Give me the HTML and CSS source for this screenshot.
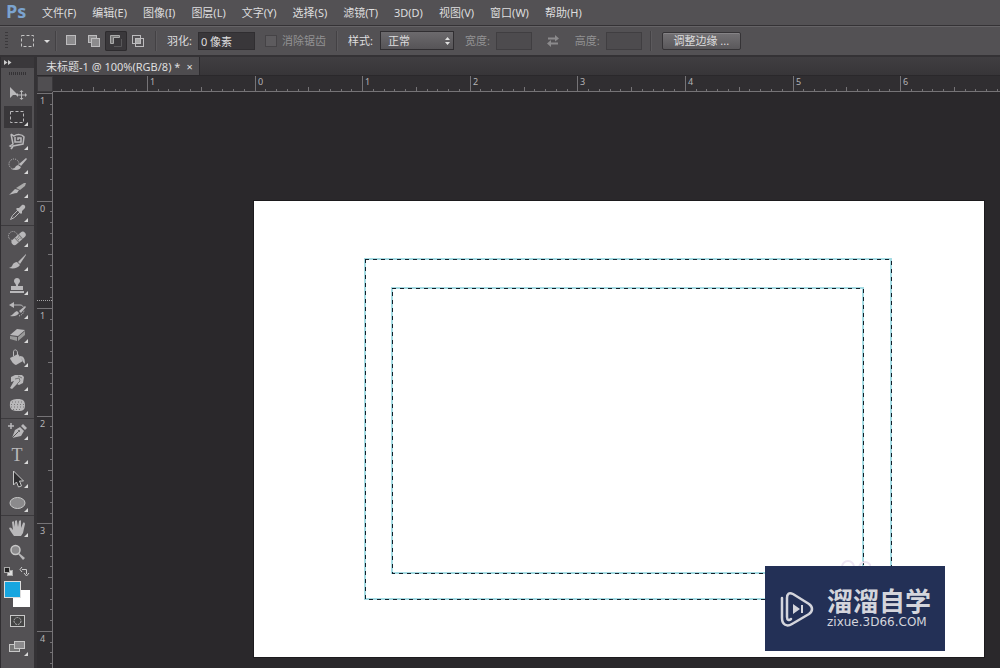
FILE: index.html
```
<!DOCTYPE html>
<html lang="zh-CN">
<head>
  <meta charset="UTF-8">
  <meta name="viewport" content="width=device-width, initial-scale=1.0">
  <title>未标题-1 @ 100%(RGB/8) *</title>
  <link rel="stylesheet" href="styles.css">
</head>
<body>
  <nav class="menu-bar">
    <span class="logo">Ps</span>
    <button>文件(F)</button>
    <button>编辑(E)</button>
    <button>图像(I)</button>
    <button>图层(L)</button>
    <button>文字(Y)</button>
    <button>选择(S)</button>
    <button>滤镜(T)</button>
    <button>3D(D)</button>
    <button>视图(V)</button>
    <button>窗口(W)</button>
    <button>帮助(H)</button>
  </nav>

  <div class="options-bar">
    <span class="grip"></span>
    <button class="preset" aria-label="工具预设">
      <svg width="30" height="14" viewBox="0 0 30 14"><rect x="1.500" y="1.500" width="12" height="11" fill="none" stroke="#c4c4c4" stroke-dasharray="3 2"/><path d="M24 6h6l-3 3z" fill="#ddd"/></svg>
    </button>
    <span class="divider"></span>
    <div class="modes">
      <button aria-label="新选区"><svg width="14" height="14" viewBox="0 0 14 14"><rect x="1.500" y="1.500" width="9" height="9" fill="#8c8b8d" stroke="#bdbcbe"/></svg></button>
      <button aria-label="添加到选区"><svg width="14" height="14" viewBox="0 0 14 14"><rect x="1.500" y="1.500" width="8" height="7" fill="#8c8b8d" stroke="#bdbcbe"/><rect x="4.500" y="4.500" width="8" height="8" fill="#8c8b8d" stroke="#bdbcbe"/></svg></button>
      <button class="on" aria-label="从选区减去"><svg width="14" height="14" viewBox="0 0 14 14"><path d="M1.500 9.500v-8h9v2h-6v6z" fill="#777" stroke="#aaa"/><path d="M12.500 5v7.500H5" fill="none" stroke="#59585a"/></svg></button>
      <button aria-label="与选区交叉"><svg width="14" height="14" viewBox="0 0 14 14"><rect x="1.500" y="1.500" width="8" height="8" fill="none" stroke="#bdbcbe"/><rect x="4.500" y="4.500" width="8" height="8" fill="none" stroke="#bdbcbe"/><path d="M5 5h4v4H5z" fill="#aaa"/></svg></button>
    </div>
    <span class="divider"></span>
    <label for="feather">羽化:</label>
    <input class="feather" id="feather" type="text" value="0 像素">
    <label class="check dim"><input type="checkbox" disabled>消除锯齿</label>
    <span class="divider"></span>
    <label for="style">样式:</label>
    <div class="select">
      <select id="style"><option>正常</option><option>固定比例</option><option>固定大小</option></select>
      <svg width="5" height="8" viewBox="0 0 5 8"><path d="M0 3l2.500-3L5 3zM0 5h5L2.500 8z" fill="#e0e0e0"/></svg>
    </div>
    <label class="dim" for="width">宽度:</label>
    <input class="size" id="width" type="text" disabled>
    <button class="swap" aria-label="高度和宽度互换" disabled><svg width="14" height="12" viewBox="0 0 14 12"><path d="M2 2.500h7V0l4 3.500-4 3v-2H2zM12 7.500H5V5L1 8.500 5 12V9.500h7z" fill="#8b8a8c"/></svg></button>
    <label class="dim" for="height">高度:</label>
    <input class="size" id="height" type="text" disabled>
    <span class="divider"></span>
    <button class="refine">调整边缘 ...</button>
  </div>

  <div class="workspace">
    <aside class="toolbox">
      <div class="toolbox-head"><svg width="8" height="5" viewBox="0 0 8 5"><path d="M0 0l3.500 2.500L0 5zM4 0l3.500 2.500L4 5z" fill="#ccc"/></svg></div>
      <div class="toolbox-grip"><span></span></div>

      <div class="group">
        <button aria-label="移动"><svg viewBox="0 0 28 24"><path d="M6 6v11l3-3h5z"/><path class="line" d="M17.500 10v8M13.500 14h8"/><path d="M15.500 11l2-2 2 2zM15.500 17l2 2 2-2zM14 12l-2 2 2 2zM21 12l2 2-2 2z"/></svg></button>
        <button class="more on" aria-label="矩形选框"><svg viewBox="0 0 28 24"><rect class="line" x="6.500" y="6.500" width="13" height="11" stroke-dasharray="3 2"/></svg></button>
        <button class="more" aria-label="套索"><svg viewBox="0 0 28 24"><path class="line" d="M7 5l3 2c3-2 8-2 10 1l-1 7-10 2-2 3M7 5l2 10-3 2 3 2" stroke-width="1.500"/><path class="line" d="M11 8v5h6V9h-3v2" stroke-width="1.500"/></svg></button>
        <button class="more" aria-label="快速选择"><svg viewBox="0 0 28 24"><circle class="line" cx="10" cy="11" r="5" stroke-dasharray="1 1"/><path d="M22 5l-7 6 2 2 6-7zM14 12l3 2c-1 3-5 4-10 2 3 0 4-1 5-3z"/></svg></button>
        <button class="more" aria-label="裁剪"><svg viewBox="0 0 28 24"><path d="M5 18l6-6 4 1-2 3c-3 0-5 1-8 2z"/><path d="M12 11l8-5h2l-1 3-5 4z" fill="#aaa"/></svg></button>
        <button class="more" aria-label="吸管"><svg viewBox="0 0 28 24"><path class="line" d="M6.500 18.500l2-4 6-6 2 2-6 6z"/><path d="M13 7l2 0 3-3c2-1 4 1 3 3l-3 3v2l-1 1-5-5z"/></svg></button>
      </div>

      <div class="group">
        <button class="more" aria-label="修复画笔"><svg viewBox="0 0 28 24"><circle class="line" cx="9" cy="10" r="4.500" stroke-dasharray="1 1"/><g transform="rotate(-42 15 12)"><rect x="6" y="9" width="17" height="6" rx="3"/><path d="M12 9v6M17 9v6" stroke="#777"/><path d="M13 11h1M15 11h1M13 13h1M15 13h1" stroke="#666"/></g></svg></button>
        <button class="more" aria-label="画笔"><svg viewBox="0 0 28 24"><path d="M22 4l-8 8 2 2 6-9zM13 12l3 3c-2 3-6 4-11 3 3-1 3-2 4-4 1-1 2-2 4-2z"/></svg></button>
        <button class="more" aria-label="仿制图章"><svg viewBox="0 0 28 24"><path d="M12 12c0-3-2-3-2-5 0-4 6-4 6 0 0 2-2 2-2 5h5v4H7v-4zM6 17h14v2H6z"/></svg></button>
        <button class="more" aria-label="历史记录画笔"><svg viewBox="0 0 28 24"><path class="line" d="M9 7h7c2 0 3 1 3 2"/><path d="M10 4v6L5 7z"/><path d="M21 8l-6 5 2 2 5-6zM13 13l2 2c-1 2-4 4-9 3 3-1 4-4 7-5z"/><path class="line" d="M15 18c3-1 5-3 5-6" stroke-dasharray="1 1"/></svg></button>
        <button class="more" aria-label="橡皮擦"><svg viewBox="0 0 28 24"><path d="M6 13l7-6 8 1-7 6z"/><path d="M6 14l7 1v4l-7-2zM14 15l7-6v4l-7 6z" fill="#999"/></svg></button>
        <button class="more" aria-label="油漆桶"><svg viewBox="0 0 28 24"><path d="M6 12l8-4 5 7-7 4c-2 0-5-4-6-7z"/><path class="line" d="M13.500 12V7c0-4-4-4-4-1v4"/><path d="M16 10c4 0 5 3 5 8l-2-2c0-2-1-3-3-4z"/></svg></button>
        <button class="more" aria-label="涂抹"><svg viewBox="0 0 28 24"><path d="M7 7l4-2h7l2 2-1 6-4 2-2-1-5 5-2-1 4-7-3 1z"/><path d="M11 9l4-1 1 3-3 3M14 6l4 2" fill="none" stroke="#777"/></svg></button>
        <button class="more" aria-label="海绵"><svg viewBox="0 0 28 24"><path d="M6 9c0-3 4-4 8-4 5 0 7 2 7 6s-1 6-7 6c-5 0-9-1-8-8z"/><path d="M8 8h10M7 10.500h13M7 13h13M9 15.500h9" stroke="#777" stroke-dasharray="1 2" fill="none"/></svg></button>
      </div>

      <div class="group">
        <button class="more" aria-label="钢笔"><svg viewBox="0 0 28 24"><path class="line" d="M7 4v6M4 7h6" stroke-width="1.500"/><path d="M8 19l3-8 5-3 4 4-3 5z"/><path d="M17 7l2-2 4 4-2 2z"/><path d="M8 19l6-6" stroke="#555"/><circle cx="15" cy="12" r="1" fill="#555"/></svg></button>
        <button class="more" aria-label="文字"><svg viewBox="0 0 28 24"><text class="type-glyph" x="13" y="18" text-anchor="middle">T</text></svg></button>
        <button class="more" aria-label="路径选择"><svg viewBox="0 0 28 24"><path d="M9.500 4v14l3-3 2 5 3-1-2-5h4z" fill="#302f31" stroke="#c8c8c8"/></svg></button>
        <button class="more" aria-label="椭圆"><svg viewBox="0 0 28 24"><ellipse cx="13.500" cy="12" rx="7.500" ry="5.500" fill="#8b8a8c" stroke="#c8c8c8"/></svg></button>
      </div>

      <div class="group">
        <button class="more" aria-label="抓手"><svg viewBox="0 0 28 24"><path d="M10 20c-2-3-4-5-5-8 1-1 2-1 4 2L8 6c1-1 2-1 2 0l1 5V5c1-1 2-1 2 0l1 6 1-6c1-1 2-1 2 0v7l2-5c1-1 2 0 2 1l-2 9-2 3z"/></svg></button>
        <button aria-label="缩放"><svg viewBox="0 0 28 24"><circle cx="11.500" cy="10" r="4.500" fill="#8b8a8c" stroke="#c8c8c8" stroke-width="1.500"/><path d="M15 13l6 5-2 2-5-6z"/></svg></button>
      </div>

      <svg class="swatches" viewBox="0 0 28 46" role="img" aria-label="前景色和背景色">
        <rect x="3.500" y="6.500" width="5" height="5" fill="#ddd" stroke="#aaa"/>
        <rect x="0.500" y="3.500" width="5" height="5" fill="#222" stroke="#aaa"/>
        <path d="M18 5.500h4.500V10M18 3l-2 2.500L18 8M20 9l2.500 3L25 9" fill="none" stroke="#ccc"/>
        <rect x="9" y="26" width="17" height="17" fill="#fff"/>
        <rect x="0.500" y="17.500" width="16" height="16" fill="#17a6e0" stroke="#ddd"/>
      </svg>
      <button aria-label="快速蒙版"><svg viewBox="0 0 28 24"><rect x="6.500" y="5.500" width="14" height="11" fill="#444" stroke="#c8c8c8"/><circle class="line" cx="13.500" cy="11" r="3.500" stroke-dasharray="2 1"/></svg></button>
      <button class="more" aria-label="屏幕模式"><svg viewBox="0 0 28 24"><rect x="5.500" y="9.500" width="10" height="7" fill="#777" stroke="#c8c8c8"/><rect x="10.500" y="6.500" width="10" height="7" fill="#8b8a8c" stroke="#c8c8c8"/></svg></button>
    </aside>

    <main class="document">
      <div class="tabs">
        <div class="tab"><span>未标题-1 @ 100%(RGB/8) *</span><button aria-label="关闭">×</button></div>
      </div>
      <div class="stage">
        <div class="corner"></div>
        <svg class="ruler ruler-x" id="rulerX"></svg>
        <svg class="ruler ruler-y" id="rulerY"></svg>
        <div class="canvas">
          <div class="paper">
            <svg class="selection outer"><rect class="edge" width="100%" height="100%"/><rect class="ants" width="100%" height="100%"/></svg>
            <svg class="selection inner"><rect class="edge" width="100%" height="100%"/><rect class="ants" width="100%" height="100%"/></svg>
            <svg class="faint" width="32" height="12" viewBox="0 0 32 12"><circle cx="9" cy="7" r="6"/><circle cx="26" cy="8" r="6"/></svg>
            <div class="watermark">
              <svg width="36" height="38" viewBox="0 0 36 38">
                <path d="M3 8v20c0 7 5 9 10 6l17-10c4-3 4-7 0-10L14 4c-4-2-6 0-6 4v19c0 3 2 4 4 2" fill="none" stroke="#d4d5dc" stroke-width="2.500" stroke-linecap="round"/>
                <path d="M14 14l7 5-7 5zM22 15h2v8h-2z" fill="#d4d5dc"/>
              </svg>
              <div class="watermark-text">
                <strong>溜溜自学</strong>
                <span>zixue.3D66.COM</span>
              </div>
            </div>
          </div>
        </div>
      </div>
    </main>
  </div>

  <script>
    const UNIT = 107.6;
    const NS = 'http://www.w3.org/2000/svg';

    function add(svg, name, attrs, text) {
      const el = document.createElementNS(NS, name);
      for (const key in attrs) el.setAttribute(key, attrs[key]);
      if (text !== undefined) el.textContent = text;
      svg.appendChild(el);
    }

    // 每个单位分为 10 格，中间一格稍长
    function drawRuler(svg, origin, vertical) {
      const box = svg.getBoundingClientRect();
      const length = vertical ? box.height : box.width;
      const depth = vertical ? box.width : box.height;
      svg.innerHTML = '';
      for (let i = -Math.floor(origin / UNIT * 10); origin + i * UNIT / 10 < length; i++) {
        const pos = Math.floor(origin + i * UNIT / 10);
        const size = i % 10 === 0 ? depth : i % 5 === 0 ? 5 : 3;
        const start = depth - size;
        if (vertical) {
          add(svg, 'rect', { x: start, y: pos, width: size, height: 1 });
        } else {
          add(svg, 'rect', { x: pos, y: start, width: 1, height: size });
        }
        if (i % 10 === 0) {
          const at = vertical ? { x: 3, y: pos + 11 } : { x: pos + 3, y: 9 };
          add(svg, 'text', at, Math.abs(i / 10));
        }
      }
      if (vertical) {
        add(svg, 'path', { class: 'cursor', d: 'M0 208.5h' + depth });
      }
    }

    function drawRulers() {
      drawRuler(document.getElementById('rulerX'), 202, false);
      drawRuler(document.getElementById('rulerY'), 109, true);
    }

    drawRulers();
    window.addEventListener('resize', drawRulers);
  </script>
</body>
</html>
```
FILE: styles.css
```
:root {
  --panel: #535154;
  --dark: #2a282b;
  --text: #dededf;
  --dim: #929193;
  --icon: #b9b8ba;
}

* {
  margin: 0;
  padding: 0;
  box-sizing: border-box;
}

body {
  font-family: 'Noto Sans', 'Noto Sans CJK SC', sans-serif;
  font-size: 11px;
  line-height: 16px;
  color: var(--text);
  background: var(--dark);
  height: 100vh;
  display: flex;
  flex-direction: column;
  overflow: hidden;
}

button,
input,
select {
  font: inherit;
  color: inherit;
  background: none;
  border: none;
}

svg {
  display: block;
}

/* 菜单栏 */
.menu-bar {
  display: flex;
  align-items: center;
  height: 25px;
  flex-shrink: 0;
  background: var(--panel);
  padding-left: 6px;
}

.logo {
  width: 28px;
  padding-bottom: 3px;
  font-family: 'Open Sans', sans-serif;
  font-size: 18px;
  font-weight: bold;
  color: #7ba3cf;
}

.menu-bar button {
  padding: 0 8px;
  white-space: nowrap;
}

/* 选项栏 */
.options-bar {
  display: flex;
  align-items: center;
  height: 32px;
  flex-shrink: 0;
  background: var(--panel);
  border-top: 1px solid #343235;
  border-bottom: 2px solid #343235;
  box-shadow: inset 0 1px #656366;
  padding-left: 5px;
  white-space: nowrap;
}

.grip {
  width: 3px;
  height: 18px;
  margin-right: 12px;
  background: repeating-linear-gradient(#3b393c 0 1px, transparent 1px 3px);
}

.divider {
  width: 2px;
  height: 20px;
  background: #434144;
  border-right: 1px solid #5c5a5d;
  margin: 0 10px 0 8px;
}

.preset {
  margin-right: -3px;
}

.modes {
  display: flex;
  margin: 0 0 0 -6px;
}

.modes button {
  width: 22px;
  height: 20px;
  padding: 3px 4px;
}

.modes .on {
  background: #3a383b;
  border-radius: 2px;
  box-shadow: inset 0 0 0 1px #2d2b2e;
}

.modes + .divider {
  margin-left: 6px;
}

.dim {
  color: var(--dim);
}

.feather {
  width: 57px;
  height: 18px;
  margin-left: 6px;
  padding: 0 2px;
  background: #39373a;
  border: 1px solid #302e31;
}

.check {
  display: flex;
  align-items: center;
  gap: 5px;
  margin: 0 2px 0 10px;
}

.check input {
  appearance: none;
  width: 12px;
  height: 12px;
  background: #5d5b5e;
  border: 1px solid #454346;
}

.select {
  position: relative;
  margin: 0 11px 0 7px;
}

.select select {
  appearance: none;
  width: 74px;
  height: 19px;
  padding: 0 7px;
  background: linear-gradient(#6c6a6d, #565457);
  border: 1px solid #302e31;
}

.select svg {
  position: absolute;
  right: 4px;
  top: 6px;
  pointer-events: none;
}

.size {
  width: 36px;
  height: 18px;
  margin-left: 6px;
  background: #4d4b4e;
  border: 1px solid #403e41;
}

.swap {
  margin: 0 15px 0 14px;
}

.refine {
  width: 79px;
  height: 18px;
  line-height: 14px;
  background: linear-gradient(#737174, #5a585b);
  border: 1px solid #353336;
  border-radius: 2px;
  box-shadow: inset 0 1px #858386;
}

/* 工具箱 */
.workspace {
  display: flex;
  flex: 1;
  min-height: 0;
}

.toolbox {
  width: 37px;
  flex-shrink: 0;
  background: var(--panel);
  border-left: 1px solid #302e31;
  border-right: 3px solid #343235;
}

.toolbox-head {
  height: 11px;
  padding: 3px;
  background: #3a383b;
}

.toolbox-grip {
  height: 13px;
  padding: 4px 8px;
}

.toolbox-grip span {
  display: block;
  height: 3px;
  background: repeating-linear-gradient(90deg, #343235 0 1px, transparent 1px 2px);
}

.group + .group {
  border-top: 1px solid #3c3a3d;
}

.toolbox button {
  display: block;
  position: relative;
  width: 28px;
  height: 24px;
  margin-left: 3px;
}

.toolbox button svg {
  width: 28px;
  height: 24px;
  fill: var(--icon);
}

.toolbox .on {
  background: linear-gradient(#39373a, #39373a) center / 28px 22px no-repeat;
}

.toolbox .more::after {
  content: '';
  position: absolute;
  right: 4px;
  bottom: 3px;
  border: 2px solid #d8d8d8;
  border-top-color: transparent;
  border-left-color: transparent;
}

.line {
  fill: none;
  stroke: var(--icon);
}

.type-glyph {
  font-family: 'Liberation Serif', serif;
  font-size: 18px;
}

.swatches {
  width: 28px;
  height: 46px;
  margin-left: 3px;
}

.swatches + button {
  margin-bottom: 1px;
}

/* 文档窗口 */
.document {
  flex: 1;
  min-width: 0;
  display: flex;
  flex-direction: column;
}

.tabs {
  display: flex;
  height: 18px;
  flex-shrink: 0;
  background: linear-gradient(#403e41, #373538);
}

.tab {
  display: flex;
  align-items: center;
  gap: 6px;
  padding: 2px 6px 0 9px;
  background: #4e4c4f;
  border-right: 1px solid #2d2b2e;
  white-space: nowrap;
}

.tab button {
  line-height: 12px;
}

.stage {
  flex: 1;
  min-height: 0;
  display: grid;
  grid-template: 16px 1fr / 16px 1fr;
  border-top: 1px solid #2a282b;
}

.corner {
  background: #504e51;
  border: 1px solid #3a383b;
}

.ruler {
  width: 100%;
  height: 100%;
  background: #302e31;
  fill: #757376;
}

.ruler text {
  font-size: 9px;
  fill: #b5b4b6;
}

.ruler-x {
  border-bottom: 1px solid #757376;
}

.ruler-y {
  border-right: 1px solid #757376;
}

.ruler .cursor {
  stroke: #a3a2a4;
  stroke-dasharray: 1 1;
}

.canvas {
  display: flex;
  min-width: 0;
  padding: 109px 16px 11px 201px;
}

.paper {
  position: relative;
  flex: 1;
  background: #fff;
  box-shadow: 0 0 0 1px #1c1a1d;
}

.selection {
  position: absolute;
  overflow: visible;
  fill: none;
  shape-rendering: crispEdges;
}

.outer {
  left: 111px;
  top: 58px;
  width: calc(100% - 204px);
  height: calc(100% - 116px);
}

.inner {
  left: 138px;
  top: 87px;
  width: calc(100% - 259px);
  height: calc(100% - 171px);
}

.edge {
  stroke: #a5dbe3;
  stroke-width: 2px;
}

.ants {
  stroke: #14202a;
  stroke-width: 1px;
  stroke-dasharray: 4 4;
}

.faint {
  position: absolute;
  right: 113px;
  bottom: 85px;
  fill: none;
  stroke: #eee6f3;
  stroke-width: 2px;
}

.watermark {
  position: absolute;
  right: 39px;
  bottom: 6px;
  width: 180px;
  height: 85px;
  display: flex;
  align-items: center;
  gap: 12px;
  padding-left: 14px;
  background: #233056;
  color: #d4d5dc;
}

.watermark-text {
  display: flex;
  flex-direction: column;
}

.watermark-text strong {
  font-family: 'Noto Sans CJK SC', sans-serif;
  font-size: 26px;
  line-height: 26px;
}

.watermark-text span {
  font-family: 'DejaVu Sans', sans-serif;
  font-size: 12px;
  line-height: 18px;
}
```
